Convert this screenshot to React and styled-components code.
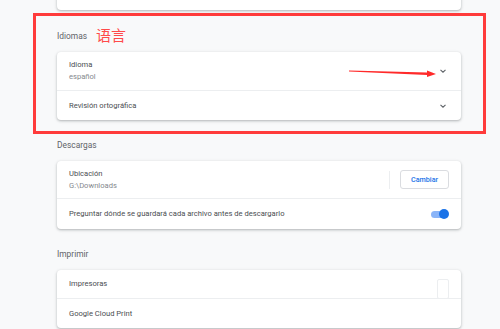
import React from 'react'
import styled, { createGlobalStyle } from 'styled-components'

const GlobalStyle = createGlobalStyle`
  html, body {
    margin: 0;
    height: 100%;
    background: #f8f9fa;
    overflow: hidden;
  }
  body {
    font-family: Roboto, "Noto Sans", "Liberation Sans", "Noto Sans CJK SC", sans-serif;
  }
`

const Page = styled.div`
  width: 404px;
  padding-left: 57px;
`

const Card = styled.div`
  background: #fff;
  border-radius: 4px;
  box-shadow: 0 1px 2px rgba(60, 64, 67, 0.25), 0 1px 3px 1px rgba(60, 64, 67, 0.1);
  margin-top: ${(p) => p.$top || 0}px;
`

const Row = styled.div`
  position: relative;
  display: flex;
  align-items: center;
  height: ${(p) => p.$h}px;
  padding: 0 12px;
  border-top: ${(p) => (p.$first ? 'none' : '1px solid #eceef0')};
`

const Texts = styled.div`
  flex: 1;
  display: flex;
  flex-direction: column;
`

const Label = styled.div`
  font-size: 7.6px;
  line-height: 12px;
  color: #4a4d51;
  white-space: nowrap;
`

const Sub = styled(Label)`
  color: #85898e;
`

const Section = styled.div`
  margin-top: ${(p) => p.$top}px;
`

const Highlight = styled.div`
  margin: 3px -25px 0 -24px;
  padding: 14px 22px 11px 21px;
  border: 3px solid #ff3b3b;
`

const Title = styled.div`
  display: flex;
  align-items: center;
  gap: 9px;
  height: 12px;
  padding-bottom: 10px;
  font-size: 8.4px;
  color: #5f6368;
`

const Note = styled.span`
  font-size: 15px;
  color: #ff4a4a;
  font-family: "Noto Sans CJK SC", sans-serif;
  margin-top: -3px;
`

const Chevron = styled.svg`
  width: 12px;
  height: 12px;
  flex: none;
`

const Arrow = styled.svg`
  position: absolute;
  left: 290px;
  top: 14px;
  width: 92px;
  height: 14px;
`

const Separator = styled.div`
  width: 1px;
  height: 18px;
  background: #eceef0;
  margin-right: 10px;
`

const Button = styled.button`
  width: 49px;
  height: 19px;
  border: 1px solid #dadce0;
  border-radius: 3px;
  background: #fff;
  color: #1a73e8;
  font-family: inherit;
  font-size: 7.2px;
  font-weight: 500;
  padding: 0;
`

const Toggle = styled.div`
  position: relative;
  width: 18px;
  height: 10px;
  &::before {
    content: '';
    position: absolute;
    left: 0;
    top: 1.5px;
    width: 16px;
    height: 7px;
    border-radius: 4px;
    background: #8ab4f8;
  }
  &::after {
    content: '';
    position: absolute;
    right: 0;
    top: 0;
    width: 10px;
    height: 10px;
    border-radius: 50%;
    background: #1a73e8;
  }
`

const Ghost = styled.div`
  width: 10px;
  height: 18px;
  margin-top: 10px;
  border: 1px solid #eceef0;
  border-radius: 2px;
`

const Expand = () => (
  <Chevron viewBox="0 0 12 12">
    <path d="M3.5 4.8 L6 7.2 L8.5 4.8" fill="none" stroke="#5f6368" strokeWidth="1.1" />
  </Chevron>
)

export default function App() {
  return (
    <>
      <GlobalStyle />
      <Page>
        <Card $top={-18}>
          <Row $first $h={28}>
            <Label>Borra el historial, las cookies, la caché y mucho más</Label>
          </Row>
        </Card>

        <Highlight>
          <Title>
            Idiomas <Note>语言</Note>
          </Title>
          <Card>
            <Row $first $h={38}>
              <Texts>
                <Label>Idioma</Label>
                <Sub>español</Sub>
              </Texts>
              <Expand />
              <Arrow viewBox="0 0 92 14">
                <polygon
                  points="2,4.6 80,6.4 80,4.5 89,8 80,10.9 80,8.9 2,5.4"
                  fill="#ff2a2a"
                />
              </Arrow>
            </Row>
            <Row $h={29}>
              <Texts>
                <Label>Revisión ortográfica</Label>
              </Texts>
              <Expand />
            </Row>
          </Card>
        </Highlight>

        <Section $top={5}>
          <Title>Descargas</Title>
          <Card>
            <Row $first $h={37}>
              <Texts>
                <Label>Ubicación</Label>
                <Sub>G:\Downloads</Sub>
              </Texts>
              <Separator />
              <Button>Cambiar</Button>
            </Row>
            <Row $h={30}>
              <Texts>
                <Label>Preguntar dónde se guardará cada archivo antes de descargarlo</Label>
              </Texts>
              <Toggle />
            </Row>
          </Card>
        </Section>

        <Section $top={19}>
          <Title>Imprimir</Title>
          <Card>
            <Row $first $h={28}>
              <Texts>
                <Label>Impresoras</Label>
              </Texts>
              <Ghost />
            </Row>
            <Row $h={29}>
              <Texts>
                <Label>Google Cloud Print</Label>
              </Texts>
            </Row>
          </Card>
        </Section>
      </Page>
    </>
  )
}
